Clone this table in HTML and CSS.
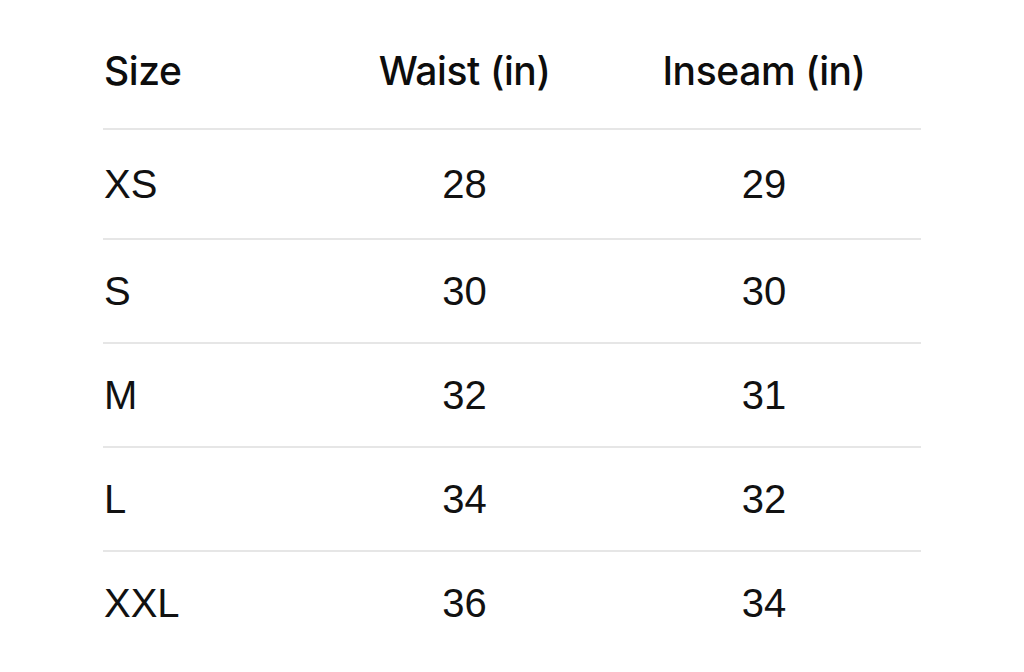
FILE: index.html
```html
<!DOCTYPE html>
<html>
<head>
<meta charset="utf-8">
<link rel="stylesheet" href="styles.css">
</head>
<body>
<div class="table">
  <div class="row head">
    <div class="cell first">Size</div>
    <div class="cell">Waist (in)</div>
    <div class="cell">Inseam (in)</div>
  </div>
  <div class="row body top">
    <div class="cell first">XS</div>
    <div class="cell">28</div>
    <div class="cell">29</div>
  </div>
  <div class="row body">
    <div class="cell first">S</div>
    <div class="cell">30</div>
    <div class="cell">30</div>
  </div>
  <div class="row body">
    <div class="cell first">M</div>
    <div class="cell">32</div>
    <div class="cell">31</div>
  </div>
  <div class="row body">
    <div class="cell first">L</div>
    <div class="cell">34</div>
    <div class="cell">32</div>
  </div>
  <div class="row body">
    <div class="cell first">XXL</div>
    <div class="cell">36</div>
    <div class="cell">34</div>
  </div>
</div>
</body>
</html>
```
FILE: styles.css
```css
html, body {
  margin: 0;
  padding: 0;
  background: #ffffff;
}
body {
  width: 1024px;
  height: 672px;
  overflow: hidden;
}
.table {
  margin: 16px 0 0 103px;
  width: 818px;
  color: #111111;
}
.row {
  display: grid;
  grid-template-columns: 212px 299px 300px;
  align-items: center;
  box-sizing: border-box;
}
.cell {
  text-align: center;
}
.cell.first {
  text-align: left;
  padding-left: 1px;
}
.head {
  height: 112px;
  padding-bottom: 4px;
  font-family: "Inter", "Liberation Sans", sans-serif;
  font-weight: 500;
  font-size: 39px;
  letter-spacing: -0.4px;
  color: #0d0d0d;
}
.body {
  border-top: 2px solid #e6e6e6;
  height: 104px;
  font-family: "Liberation Sans", Arial, sans-serif;
  font-size: 40px;
}
.body.top {
  height: 110px;
}
```
